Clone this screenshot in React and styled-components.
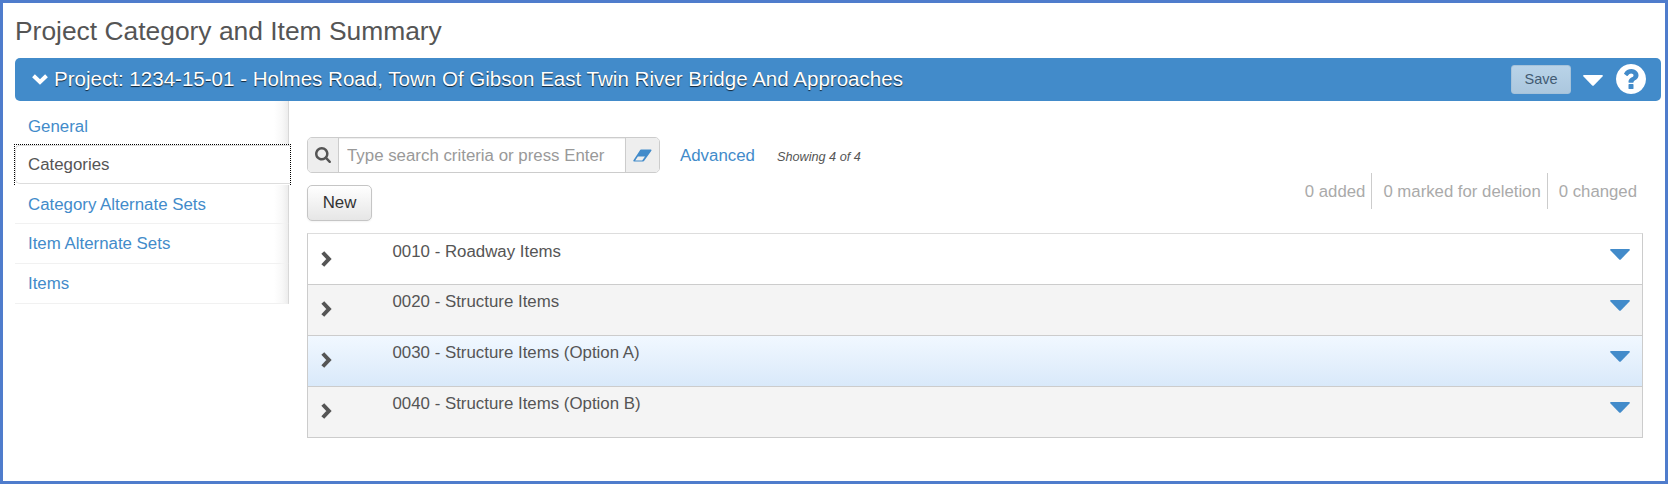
import React from "react";
import styled, { createGlobalStyle, css } from "styled-components";

const Global = createGlobalStyle`
  * { box-sizing: border-box; }
  body { margin: 0; background: #fff; font-family: "Liberation Sans", Arial, sans-serif; font-size: 16.85px; line-height: 20px; color: #555; }
  button, input { font: inherit; }
`;

const Page = styled.main`
  width: 1668px;
  height: 484px;
  border: 3px solid #4f7ccc;
  padding: 0 4px 0 12px;
`;

const Title = styled.h1`
  margin: 0;
  height: 55px;
  padding-top: 12px;
  font-size: 26.4px;
  line-height: 32px;
  font-weight: 400;
`;

const ProjectBar = styled.header`
  display: flex;
  align-items: center;
  width: 1646px;
  height: 43px;
  padding: 0 15px 0 17px;
  border-radius: 5px;
  background: #428bca;
  color: #fff;
`;

const ProjectName = styled.h2`
  flex: 1;
  margin: 0 0 2px 6px;
  font-size: 20.55px;
  line-height: 24px;
  font-weight: 400;
  white-space: nowrap;
  text-shadow: 0 1px 1px rgba(0, 0, 0, 0.75);
`;

const SaveButton = styled.button`
  width: 60px;
  height: 29px;
  margin-right: 12px;
  padding: 0 0 2px;
  border: 1px solid #a5c2da;
  border-radius: 3px;
  background: linear-gradient(#b9d3e8, #abc7de);
  color: #425b73;
  font-size: 14.5px;
`;

const MenuButton = styled.button`
  display: flex;
  padding: 0;
  border: 0;
  background: none;
  color: ${(p) => p.$color};
  margin: ${(p) => p.$margin};
`;

const Columns = styled.div`
  display: flex;
`;

const Sidebar = styled.nav`
  width: 274px;
  height: 203px;
  background: linear-gradient(to left, #d8d8d8 0, #d8d8d8 1px, #ededed 1px, #f8f8f8 7px, #fff 15px);
`;

const NavItem = styled.a`
  display: block;
  height: 40px;
  padding: 10px 13px 0;
  color: #428bca;
  border-bottom: 1px solid transparent;
  border-image: linear-gradient(to right, #f1f1f1 96%, transparent) 1;
  ${(p) => p.$first && css`
    height: 43px;
    padding-top: 16px;
    border: 0;
  `}
  ${(p) => p.$afterActive && css`
    padding-top: 11px;
  `}
  ${(p) => p.$active && css`
    width: 277px;
    height: 41px;
    margin: 0 0 -1px -1px;
    padding: 0;
    border: 1px dotted #000;
    border-bottom: 0;
    border-image: none;
    background: #fff;
    color: #555;
  `}
`;

const ActiveLabel = styled.span`
  display: block;
  height: 39px;
  padding: 9px 12px;
  border: 1px solid #ddd;
  border-right: 0;
  border-radius: 5px 0 0 5px;
`;

const Content = styled.section`
  width: 1336px;
  margin-left: 18px;
  padding-top: 36px;
`;

const SearchRow = styled.div`
  display: flex;
  align-items: center;
`;

const SearchBox = styled.div`
  display: flex;
  width: 353px;
  height: 36px;
  border: 1px solid #ccc;
  border-radius: 5px;
  overflow: hidden;
`;

const AddOn = styled.span`
  display: flex;
  align-items: center;
  justify-content: center;
  width: ${(p) => p.$width}px;
  background: #eee;
  color: #555;
`;

const SearchInput = styled.input`
  flex: 1;
  min-width: 0;
  padding: 1px 8px 0;
  border: 1px solid #ccc;
  border-width: 0 1px;
  box-shadow: inset 0 1px 1px rgba(0, 0, 0, 0.075);
  outline: 0;
  &::placeholder { color: #999; opacity: 1; }
`;

const Advanced = styled.a`
  margin-left: 20px;
  padding-top: 1px;
  color: #428bca;
`;

const Showing = styled.em`
  margin-left: 22px;
  padding-top: 3px;
  font-size: 12.7px;
`;

const ActionRow = styled.div`
  display: flex;
  justify-content: space-between;
  height: 60px;
`;

const NewButton = styled.button`
  width: 65px;
  height: 36px;
  margin-top: 12px;
  padding: 0;
  border: 1px solid #c5c5c5;
  border-radius: 5px;
  background: linear-gradient(#fff, #e6e6e6);
  box-shadow: 0 1px 2px rgba(0, 0, 0, 0.05);
  color: #333;
`;

const Counts = styled.div`
  display: flex;
  height: 36px;
  padding-right: 6px;
  color: #aaa;
  font-size: 16.75px;
  line-height: 37px;
`;

const Count = styled.span`
  & + & {
    margin-left: 6px;
    padding-left: 11px;
    border-left: 1px solid #ccc;
  }
`;

const Table = styled.div`
  border: 1px solid #ccc;
  border-top-color: #ddd;
  border-bottom: 0;
`;

const Row = styled.div`
  display: flex;
  height: 51px;
  padding: 0 12px 0 13px;
  border-bottom: 1px solid #ccc;
  background: ${(p) => p.$fill};
`;

const Expander = styled.span`
  display: flex;
  width: 71.5px;
  padding-top: 16px;
  ${Row}:first-child & { padding-top: 17px; }
`;

const RowLabel = styled.span`
  flex: 1;
  padding-top: 7px;
  ${Row}:first-child & { padding-top: 8px; }
`;

const Chevron = ({ down }) => (
  <svg width={down ? 16 : 11} height={down ? 11 : 16} viewBox={down ? "0 0 16 11" : "0 0 11 16"} fill="none" stroke="currentColor" strokeWidth="4">
    <path d={down ? "M1.5 1.8L8 7.9L14.5 1.8" : "M1.8 1.5L7.9 8L1.8 14.5"} />
  </svg>
);

const Caret = () => (
  <svg width="20" height="11" viewBox="0 0 20 11" fill="currentColor">
    <path d="M.8 0H19.2Q20.3 .4 19.5 1.4L10.8 10.4Q10 11.2 9.2 10.4L.5 1.4Q-.3 .4 .8 0Z" />
  </svg>
);

const Eraser = () => (
  <svg width="19" height="13" viewBox="0 0 19 13" fill="#428bca">
    <path fillRule="evenodd" d="M8 .5H17.8Q19 .8 18.2 2L11.4 11.6Q10.8 12.5 10 12.5H1Q-.2 12 .6 11L7 1.2Q7.4 .5 8 .5ZM4.9 7.6L2.2 11.4H9.2L12 7.6Z" />
  </svg>
);

const SearchIcon = () => (
  <svg width="16" height="16" viewBox="64 128 1664 1664" fill="currentColor">
    <path d="M1216 832q0-185-131.5-316.5t-316.5-131.5-316.5 131.5-131.5 316.5 131.5 316.5 316.5 131.5 316.5-131.5 131.5-316.5zm512 832q0 52-38 90t-90 38q-54 0-90-38l-343-342q-179 124-399 124-143 0-273.5-55.5t-225-150-150-225-55.5-273.5 55.5-273.5 150-225 225-150 273.5-55.5 273.5 55.5 225 150 150 225 55.5 273.5q0 220-124 399l343 343q37 37 37 90z" />
  </svg>
);

const HelpLink = styled.a`
  display: flex;
  margin: 0 0 1px 0;
`;

const HelpIcon = () => (
  <svg width="30" height="30" viewBox="128 128 1536 1536" fill="currentColor">
    <path d="M1024 1376v-192q0-14-9-23t-23-9h-192q-14 0-23 9t-9 23v192q0 14 9 23t23 9h192q14 0 23-9t9-23zm256-672q0-88-55.5-163t-138.5-116-170-41q-243 0-371 213-15 24 8 42l132 100q7 6 19 6 16 0 25-12 53-68 86-92 34-24 86-24 48 0 85.5 26t37.5 59q0 38-20 61t-68 45q-63 28-115.5 86.5t-52.5 125.5v36q0 14 9 23t23 9h192q14 0 23-9t9-23q0-19 21.5-49.5t54.5-49.5q32-18 49-28.5t46-35 44.5-48 28-60.5 12.5-81zm384 192q0 209-103 385.5t-279.5 279.5-385.5 103-385.5-103-279.5-279.5-103-385.5 103-385.5 279.5-279.5 385.5-103 385.5 103 279.5 279.5 103 385.5z" />
  </svg>
);

const navItems = ["General", "Categories", "Category Alternate Sets", "Item Alternate Sets", "Items"];
const rows = [
  ["0010 - Roadway Items", "#fff"],
  ["0020 - Structure Items", "#f4f4f4"],
  ["0030 - Structure Items (Option A)", "linear-gradient(#f1f8ff, #d9e9fa)"],
  ["0040 - Structure Items (Option B)", "#f4f4f4"],
];

export default function App() {
  return (
    <>
      <Global />
      <Page>
        <Title>Project Category and Item Summary</Title>
        <ProjectBar>
          <Chevron down />
          <ProjectName>Project: 1234-15-01 - Holmes Road, Town Of Gibson East Twin River Bridge And Approaches</ProjectName>
          <SaveButton>Save</SaveButton>
          <MenuButton $color="#fff" $margin="2px 13px 0 0" aria-label="Project actions"><Caret /></MenuButton>
          <HelpLink aria-label="Help"><HelpIcon /></HelpLink>
        </ProjectBar>
        <Columns>
          <Sidebar>
            {navItems.map((name, i) => (
              <NavItem key={name} $first={i === 0} $active={i === 1} $afterActive={i === 2}>
                {i === 1 ? <ActiveLabel>{name}</ActiveLabel> : name}
              </NavItem>
            ))}
          </Sidebar>
          <Content>
            <SearchRow>
              <SearchBox>
                <AddOn $width={30}><SearchIcon /></AddOn>
                <SearchInput placeholder="Type search criteria or press Enter" />
                <AddOn $width={33}><Eraser /></AddOn>
              </SearchBox>
              <Advanced>Advanced</Advanced>
              <Showing>Showing 4 of 4</Showing>
            </SearchRow>
            <ActionRow>
              <NewButton>New</NewButton>
              <Counts>
                <Count>0 added</Count>
                <Count>0 marked for deletion</Count>
                <Count>0 changed</Count>
              </Counts>
            </ActionRow>
            <Table>
              {rows.map(([label, fill]) => (
                <Row key={label} $fill={fill}>
                  <Expander><Chevron /></Expander>
                  <RowLabel>{label}</RowLabel>
                  <MenuButton $color="#428bca" $margin="15px 0 0" aria-label="Row actions"><Caret /></MenuButton>
                </Row>
              ))}
            </Table>
          </Content>
        </Columns>
      </Page>
    </>
  );
}
